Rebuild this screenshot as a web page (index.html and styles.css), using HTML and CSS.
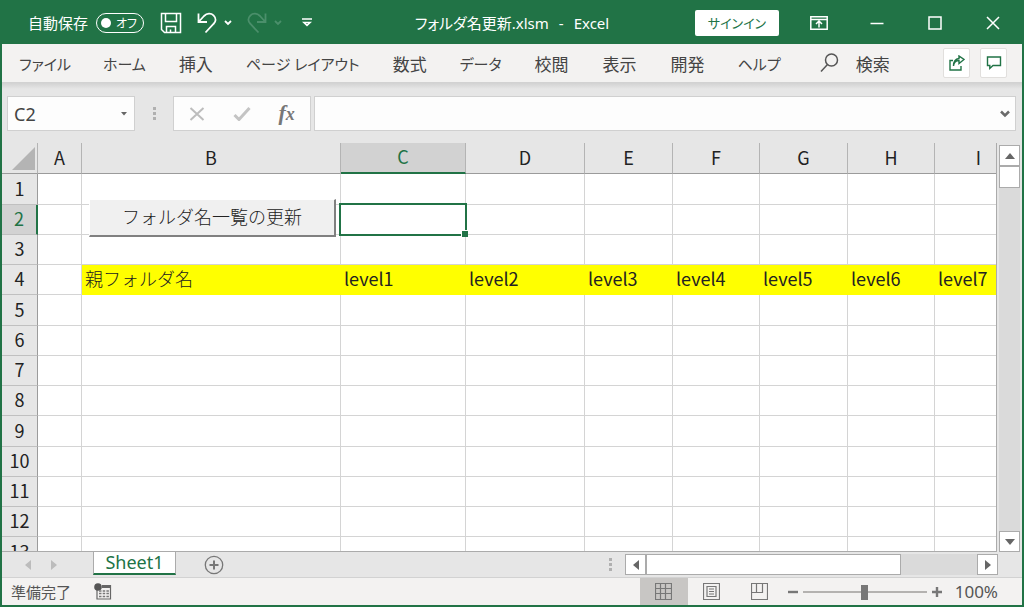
FILE: index.html
```html
<!DOCTYPE html>
<html lang="ja">
<head>
<meta charset="utf-8">
<title>フォルダ名更新.xlsm - Excel</title>
<link rel="stylesheet" href="styles.css">
</head>
<body>
<div class="window">
  <header class="titlebar">
    <div class="quick">
      <label class="autosave">自動保存
        <span class="switch"><input type="checkbox" role="switch" class="switch-box"><span class="knob"></span><span class="switch-text">オフ</span></span>
      </label>
      <button class="tool save" aria-label="上書き保存"><svg width="22" height="22" viewBox="0 0 22 22"><path d="M1.500 1.500h19v19h-16l-3-3zM5.500 1.500v8h11v-8M6.500 20.500v-6h9v6M10.500 20.500v-3"/></svg></button>
      <button class="tool undo" aria-label="元に戻す"><svg width="20" height="22" viewBox="0 0 20 22"><path d="M1.500 1.500v8.500h8.500M1.500 10L7 4C10 1 14 .800 16.500 3.300c3 3 2.500 6.200 0 8.700L8.500 20.500" stroke-width="1.800"/></svg></button>
      <button class="tool caret" aria-label="元に戻す一覧"><svg width="8" height="6" viewBox="0 0 8 6"><path d="M1 1l3 3 3-3" stroke-width="1.800"/></svg></button>
      <button class="tool redo dim" aria-label="やり直し"><svg width="20" height="22" viewBox="0 0 20 22"><path d="M18.500 1.500v8.500h-8.500M18.500 10L13 4C10 1 6 .800 3.500 3.300c-3 3-2.500 6.200 0 8.700L11.500 20.500" stroke-width="1.800"/></svg></button>
      <button class="tool caret dim" aria-label="やり直し一覧"><svg width="8" height="6" viewBox="0 0 8 6"><path d="M1 1l3 3 3-3" stroke-width="1.800"/></svg></button>
      <button class="tool customize" aria-label="クイック アクセスのカスタマイズ"><svg width="10" height="9" viewBox="0 0 10 9"><path d="M0 1h10M2 4.500h6L5 7.300z" stroke-width="1.600"/></svg></button>
    </div>
    <h1 class="doc-title"><span>フォルダ名更新.xlsm</span><span>-</span><span>Excel</span></h1>
    <div class="window-tools">
      <button class="signin">サインイン</button>
      <button class="win" aria-label="リボンの表示オプション"><svg width="18" height="14" viewBox="0 0 18 14"><path d="M.8.800h16.400v12.400H.800zM1 3.500h16M9 11.500v-6M6 8l3-3 3 3" stroke-width="1.500"/></svg></button>
      <button class="win" aria-label="最小化"><svg width="14" height="14" viewBox="0 0 14 14"><path d="M.5 7.500h13"/></svg></button>
      <button class="win" aria-label="最大化"><svg width="14" height="14" viewBox="0 0 14 14"><path d="M1 1h12v12H1z"/></svg></button>
      <button class="win" aria-label="閉じる"><svg width="14" height="14" viewBox="0 0 14 14"><path d="M1 1l12 12M13 1L1 13"/></svg></button>
    </div>
  </header>

  <nav class="ribbon">
    <button class="tab kana">ファイル</button>
    <button class="tab kana">ホーム</button>
    <button class="tab">挿入</button>
    <button class="tab kana">ページ レイアウト</button>
    <button class="tab">数式</button>
    <button class="tab kana">データ</button>
    <button class="tab">校閲</button>
    <button class="tab">表示</button>
    <button class="tab">開発</button>
    <button class="tab kana">ヘルプ</button>
    <button class="search"><svg width="19" height="20" viewBox="0 0 19 20"><circle cx="11.500" cy="7" r="6"/><path d="M7.500 11.500L1 18.500"/></svg>検索</button>
    <button class="square" aria-label="共有"><svg width="16" height="16" viewBox="0 0 16 16"><path d="M4 5.500H1v9.500h11v-4M4.500 11c.3-3.500 2-5.500 5.500-5.500V8.500L15 4.500 10 1v2.500C6.500 4 4.500 7 4.500 11z"/></svg></button>
    <button class="square" aria-label="コメント"><svg width="16" height="16" viewBox="0 0 16 16"><path d="M1.500 2h13v8.500H7L3.800 13.500v-3H1.500z"/></svg></button>
  </nav>

  <section class="formula-row">
    <div class="name-box">
      <input class="name-input" aria-label="名前ボックス" value="C2">
      <button class="name-drop" aria-label="名前一覧"><svg width="6" height="4" viewBox="0 0 6 4"><path d="M0 0h6L3 3.500z"/></svg></button>
    </div>
    <span class="dots"><i></i><i></i><i></i></span>
    <div class="formula-tools">
      <button aria-label="キャンセル"><svg width="16" height="14" viewBox="0 0 16 14"><path d="M1.500 1l13 12M14.500 1L1.500 13" stroke="#bdbdbd" stroke-width="2" fill="none"/></svg></button>
      <button aria-label="入力"><svg width="18" height="14" viewBox="0 0 18 14"><path d="M1.500 8l4.500 4.500L16.500 1" stroke="#c4c4c4" stroke-width="3" fill="none"/></svg></button>
      <button class="fx" aria-label="関数の挿入">f<span>x</span></button>
    </div>
    <div class="formula-box">
      <input class="formula-input" aria-label="数式バー">
      <button aria-label="数式バーの展開"><svg width="10" height="8" viewBox="0 0 10 8"><path d="M1 1.500l4 4 4-4" stroke="#6a6a6a" stroke-width="2.500" fill="none"/></svg></button>
    </div>
  </section>

  <main class="sheet-area">
    <div class="grid-clip">
      <table class="grid">
        <colgroup><col class="c-row"><col class="c-a"><col class="c-b"><col class="c-c"><col class="c-d"><col class="c-wide"><col class="c-slim"><col class="c-wide"><col class="c-slim"><col class="c-wide"></colgroup>
        <thead>
          <tr><th class="corner"><svg width="23" height="23" viewBox="0 0 23 23"><path d="M23 0v23H0z"/></svg></th><th>A</th><th>B</th><th class="current">C</th><th>D</th><th>E</th><th>F</th><th>G</th><th>H</th><th>I</th></tr>
        </thead>
        <tbody>
          <tr><th>1</th><td></td><td></td><td></td><td></td><td></td><td></td><td></td><td></td><td></td></tr>
          <tr><th class="current">2</th><td></td><td class="anchor"><button class="macro">フォルダ名一覧の更新</button></td><td class="anchor"><span class="selection"></span></td><td></td><td></td><td></td><td></td><td></td><td></td></tr>
          <tr><th>3</th><td></td><td></td><td></td><td></td><td></td><td></td><td></td><td></td><td></td></tr>
          <tr class="levels"><th>4</th><td></td><td class="parent">親フォルダ名</td><td>level1</td><td>level2</td><td>level3</td><td>level4</td><td>level5</td><td>level6</td><td>level7</td></tr>
          <tr><th>5</th><td></td><td></td><td></td><td></td><td></td><td></td><td></td><td></td><td></td></tr>
          <tr><th>6</th><td></td><td></td><td></td><td></td><td></td><td></td><td></td><td></td><td></td></tr>
          <tr><th>7</th><td></td><td></td><td></td><td></td><td></td><td></td><td></td><td></td><td></td></tr>
          <tr><th>8</th><td></td><td></td><td></td><td></td><td></td><td></td><td></td><td></td><td></td></tr>
          <tr><th>9</th><td></td><td></td><td></td><td></td><td></td><td></td><td></td><td></td><td></td></tr>
          <tr><th>10</th><td></td><td></td><td></td><td></td><td></td><td></td><td></td><td></td><td></td></tr>
          <tr><th>11</th><td></td><td></td><td></td><td></td><td></td><td></td><td></td><td></td><td></td></tr>
          <tr><th>12</th><td></td><td></td><td></td><td></td><td></td><td></td><td></td><td></td><td></td></tr>
          <tr><th>13</th><td></td><td></td><td></td><td></td><td></td><td></td><td></td><td></td><td></td></tr>
        </tbody>
      </table>
    </div>
    <div class="vscroll">
      <button class="scroll-button" aria-label="上へ"><svg width="10" height="6" viewBox="0 0 10 6"><path d="M0 6h10L5 0z"/></svg></button>
      <div class="vtrack"><div class="vthumb"></div></div>
      <button class="scroll-button" aria-label="下へ"><svg width="10" height="6" viewBox="0 0 10 6"><path d="M0 0h10L5 6z"/></svg></button>
    </div>
  </main>

  <div class="sheet-bar">
    <div class="sheet-nav">
      <button aria-label="前のシート"><svg width="6" height="10" viewBox="0 0 6 10"><path d="M6 0v10L0 5z"/></svg></button>
      <button aria-label="次のシート"><svg width="6" height="10" viewBox="0 0 6 10"><path d="M0 0v10l6-5z"/></svg></button>
    </div>
    <button class="sheet-tab">Sheet1</button>
    <button class="add-sheet" aria-label="新しいシート"><svg width="20" height="20" viewBox="0 0 20 20"><circle cx="10" cy="10" r="8.700" stroke-width="1.300"/><path d="M10 5.500v9M5.500 10h9" stroke-width="2"/></svg></button>
    <span class="dots bar-dots"><i></i><i></i><i></i></span>
    <div class="hscroll">
      <button class="scroll-button" aria-label="左へ"><svg width="6" height="10" viewBox="0 0 6 10"><path d="M6 0v10L0 5z"/></svg></button>
      <div class="htrack"><div class="hthumb"></div></div>
      <button class="scroll-button" aria-label="右へ"><svg width="6" height="10" viewBox="0 0 6 10"><path d="M0 0v10l6-5z"/></svg></button>
    </div>
  </div>

  <footer class="status">
    <span class="ready">準備完了</span>
    <button class="record" aria-label="マクロの記録"><svg width="18" height="17" viewBox="0 0 18 17"><path d="M3 6v10h13.500V2.500H8" fill="none" stroke="#666" stroke-width="1.200"/><path d="M8 2h9v3H8z" fill="#666"/><circle cx="4" cy="4" r="3.800" fill="#555"/><path d="M5 8h10M5 10.500h10M5 13.500h10" stroke="#777" stroke-width="1.300" stroke-dasharray="2.500 1.200"/></svg></button>
    <div class="views">
      <button class="view active" aria-label="標準"><svg width="17" height="17" viewBox="0 0 17 17"><path d="M.5.500h16v16H.500zM.500 5.500h16M.500 10.500h16M5.500.500v16M10.500.500v16"/></svg></button>
      <button class="view" aria-label="ページ レイアウト"><svg width="17" height="17" viewBox="0 0 17 17"><path d="M.5.500h16v16H.500zM4 3.500h9v10H4zM6 6h5M6 8.500h5M6 11h5"/></svg></button>
      <button class="view" aria-label="改ページ プレビュー"><svg width="17" height="17" viewBox="0 0 17 17"><path d="M.5.500h16v16H.500zM.500 9.500h11v-9M5.500.500v9"/></svg></button>
    </div>
    <div class="zoom">
      <button aria-label="縮小"><svg width="10" height="10" viewBox="0 0 10 10"><path d="M0 5h10"/></svg></button>
      <input type="range" class="zoom-range" aria-label="ズーム" min="0" max="200" value="100">
      <button aria-label="拡大"><svg width="10" height="10" viewBox="0 0 10 10"><path d="M0 5h10M5 0v10"/></svg></button>
      <button class="percent">100%</button>
    </div>
  </footer>
</div>
</body>
</html>
```

FILE: styles.css
```css
* { box-sizing: border-box; }

body {
  margin: 0;
  font-family: "Noto Sans", "Noto Sans CJK JP", sans-serif;
  color: #444;
}

button, input {
  font: inherit;
  color: inherit;
  margin: 0;
  padding: 0;
  border: 0;
  border-radius: 0;
  background: none;
}

button {
  display: flex;
  align-items: center;
  justify-content: center;
  white-space: nowrap;
}

svg { display: block; flex: none; }

.window {
  display: flex;
  flex-direction: column;
  height: 100vh;
  overflow: hidden;
  background: #e6e6e6;
  border: 2px solid #217346;
  border-top: 0;
}

/* Title bar */
.titlebar {
  display: grid;
  grid-template-columns: 1fr auto 1fr;
  align-items: center;
  height: 44px;
  padding-top: 1px;
  flex: none;
  background: #217346;
  color: #fff;
  font-size: 15px;
}

.titlebar svg { fill: none; stroke: currentColor; stroke-width: 1.5; }

.quick { display: flex; align-items: center; padding-left: 26px; }

.autosave { display: flex; align-items: center; gap: 8px; }

.switch {
  position: relative;
  display: flex;
  align-items: center;
  justify-content: space-between;
  width: 48px;
  height: 20px;
  padding: 0 6px 0 4px;
  border: 1px solid #fff;
  border-radius: 10px;
}

.switch-box {
  position: absolute;
  inset: 0;
  width: 100%;
  height: 100%;
  opacity: 0;
}

.knob { width: 10px; height: 10px; border-radius: 50%; background: #fff; }

.switch-text { font-size: 12px; font-feature-settings: "palt"; }

.save { margin-left: 16px; }
.undo { margin-left: 15px; }
.caret { margin-left: 7px; }
.redo { margin-left: 15px; }
.customize { margin-left: 20px; }
.dim { color: #4b8f6b; }

.doc-title {
  display: flex;
  align-items: baseline;
  gap: 10px;
  margin: 0;
  font-size: 15px;
  font-weight: 400;
  font-feature-settings: "palt";
}

.window-tools { display: flex; align-items: center; justify-content: flex-end; }

.signin {
  width: 84px;
  height: 26px;
  margin-right: 11px;
  border-radius: 2px;
  background: #fff;
  color: #217346;
  font-size: 13px;
  font-feature-settings: "palt";
}

.win { width: 58px; height: 43px; }

/* Ribbon tabs */
.ribbon {
  display: flex;
  align-items: center;
  height: 39px;
  flex: none;
  padding: 0 15px 0 1px;
  background: #f3f2f1;
  border-bottom: 1px solid #d2d2d2;
  font-size: 17px;
}

.tab { padding: 0 17px; height: 38px; }
.kana { padding: 0 16px; font-size: 15px; font-feature-settings: "palt"; }

.search { gap: 17px; margin-left: 23px; margin-right: auto; }
.search svg { fill: none; stroke: #555; stroke-width: 1.5; }

.square {
  flex: none;
  width: 27px;
  height: 30px;
  margin-left: 10px;
  background: #fff;
  border: 1px solid #e1dfdd;
  border-radius: 2px;
}
.square svg { fill: none; stroke: #217346; stroke-width: 1.4; }

/* Formula row */
.formula-row {
  display: flex;
  flex: none;
  height: 60px;
  padding: 13px 6px 12px 5px;
  background: linear-gradient(#d2d2d2, #e6e6e6 6px);
}

.name-box, .formula-tools, .formula-box {
  display: flex;
  align-items: center;
  background: #fdfdfd;
  border: 1px solid #d0d0d0;
}

.name-box { width: 128px; padding: 0 7px 0 6px; }
.name-input { flex: 1; min-width: 0; font-size: 18px; }
.name-drop svg { fill: #666; }

.dots {
  display: flex;
  flex-direction: column;
  align-items: center;
  justify-content: center;
  gap: 2px;
  width: 38px;
}
.dots i { width: 3px; height: 3px; background: #b0b0b0; }

.formula-tools { width: 138px; padding: 0 1px; margin-right: 3px; }
.formula-tools button { flex: 1; }

.fx {
  align-items: baseline;
  font-family: "Liberation Serif", serif;
  font-size: 22px;
  line-height: 24px;
  font-style: italic;
  font-weight: 700;
  color: #777;
}
.fx span { font-size: 18px; }

.formula-box { flex: 1; padding: 0 5px; }
.formula-input { flex: 1; min-width: 0; height: 100%; }

/* Worksheet */
.sheet-area { display: flex; flex: 1; min-height: 0; }

.grid-clip {
  flex: 1;
  min-width: 0;
  overflow: hidden;
  border-right: 1px solid #ababab;
  border-bottom: 1px solid #ababab;
  background: #fff;
}

.grid {
  width: 1021px;
  table-layout: fixed;
  border-collapse: separate;
  border-spacing: 0;
  font-family: "Noto Sans CJK JP", sans-serif;
  font-size: 18px;
  line-height: 26px;
  color: #222;
}

.c-row { width: 36px; }
.c-a { width: 44px; }
.c-b { width: 259px; }
.c-c { width: 125px; }
.c-d { width: 119px; }
.c-wide { width: 88px; }
.c-slim { width: 87px; }

.grid th, .grid td {
  height: 30px;
  padding: 0 0 3px;
  border-right: 1px solid #d4d4d4;
  border-bottom: 1px solid #d4d4d4;
  white-space: nowrap;
}

.grid tbody tr:nth-child(4n+1) > * { height: 31px; }

.grid td { padding-left: 3px; }

.grid th {
  font-weight: 400;
  background: #e6e6e6;
  border-right-color: #b4b4b4;
  border-bottom-color: #c0c0c0;
}

.grid thead th { height: 31px; border-bottom-color: #9b9b9b; }
.grid tbody th { border-right-color: #9b9b9b; }

.grid th.current { color: #217346; background: #d2d2d2; }
.grid thead th.current { border-bottom: 2px solid #217346; }
.grid tbody th.current { border-right: 2px solid #217346; }

.grid .corner svg { margin: 3px 0 0 10px; fill: #b4b4b4; }

.levels td:nth-child(n+3) { background: #ff0; border-color: #ff0; }

.parent, .macro { font-weight: 300; }

.anchor { position: relative; }

.macro {
  position: absolute;
  inset: -6px 4px -3px 7px;
  padding-bottom: 3px;
  background: #f0f0f0;
  border: 1px solid #fff;
  border-right: 2px solid #808080;
  border-bottom: 2px solid #808080;
}

.selection {
  position: absolute;
  inset: -2px -2px -2px -2px;
  border: 2px solid #217346;
}

.selection::after {
  content: "";
  position: absolute;
  right: -3px;
  bottom: -3px;
  width: 6px;
  height: 6px;
  background: #217346;
  border: 1px solid #fff;
  border-width: 1px 0 0 1px;
}

/* Scroll bars */
.scroll-button {
  width: 21px;
  height: 21px;
  flex: none;
  background: #fff;
  border: 1px solid #ababab;
}
.scroll-button svg { fill: #666; }

.vscroll {
  display: flex;
  flex-direction: column;
  width: 21px;
  margin: 2px 2px 0 2px;
}
.vtrack { flex: 1; background: #dadada; }
.vthumb { height: 22px; background: #fff; border: 1px solid #ababab; }

.hscroll { display: flex; width: 373px; margin: 2px 24px 0 0; height: 21px; }
.htrack { flex: 1; background: #dadada; }
.hthumb { width: 77%; height: 21px; background: #fff; border: 1px solid #ababab; }

/* Sheet tabs */
.sheet-bar { display: flex; height: 26px; flex: none; border-bottom: 1px solid #d2d2d2; }

.sheet-nav { display: flex; gap: 20px; width: 91px; padding-left: 23px; }
.sheet-nav svg { fill: #bcbcbc; }

.sheet-tab {
  width: 83px;
  height: 23px;
  padding-bottom: 2px;
  background: #fff;
  border: 1px solid #ababab;
  border-top: 0;
  border-bottom: 2px solid #217346;
  color: #217346;
  font-size: 18px;
  line-height: 20px;
}

.add-sheet { margin-left: 28px; }
.add-sheet svg { fill: none; stroke: #777; }
.bar-dots { width: 30px; margin-left: auto; }

/* Status bar */
.status {
  display: flex;
  align-items: center;
  height: 27px;
  flex: none;
  padding-left: 9px;
  padding-right: 24px;
  background: #f3f2f1;
  font-size: 15px;
  color: #555;
}

.record { margin-left: 23px; }
.views { display: flex; margin-left: auto; height: 100%; }
.view { width: 48px; height: 100%; }
.view.active { background: #c8c6c4; }
.view svg { fill: none; stroke: #777; stroke-width: 1.2; }

.zoom { display: flex; align-items: center; gap: 5px; margin-left: 4px; }
.zoom svg { stroke: #777; stroke-width: 2.4; }

.zoom-range { width: 124px; height: 16px; appearance: none; }
.zoom-range::-webkit-slider-runnable-track { height: 2px; background: #b4b2b0; }
.zoom-range::-webkit-slider-thumb {
  appearance: none;
  width: 7px;
  height: 15px;
  margin-top: -6px;
  background: #777;
}

.percent { margin-left: 8px; font-size: 17px; }
```
